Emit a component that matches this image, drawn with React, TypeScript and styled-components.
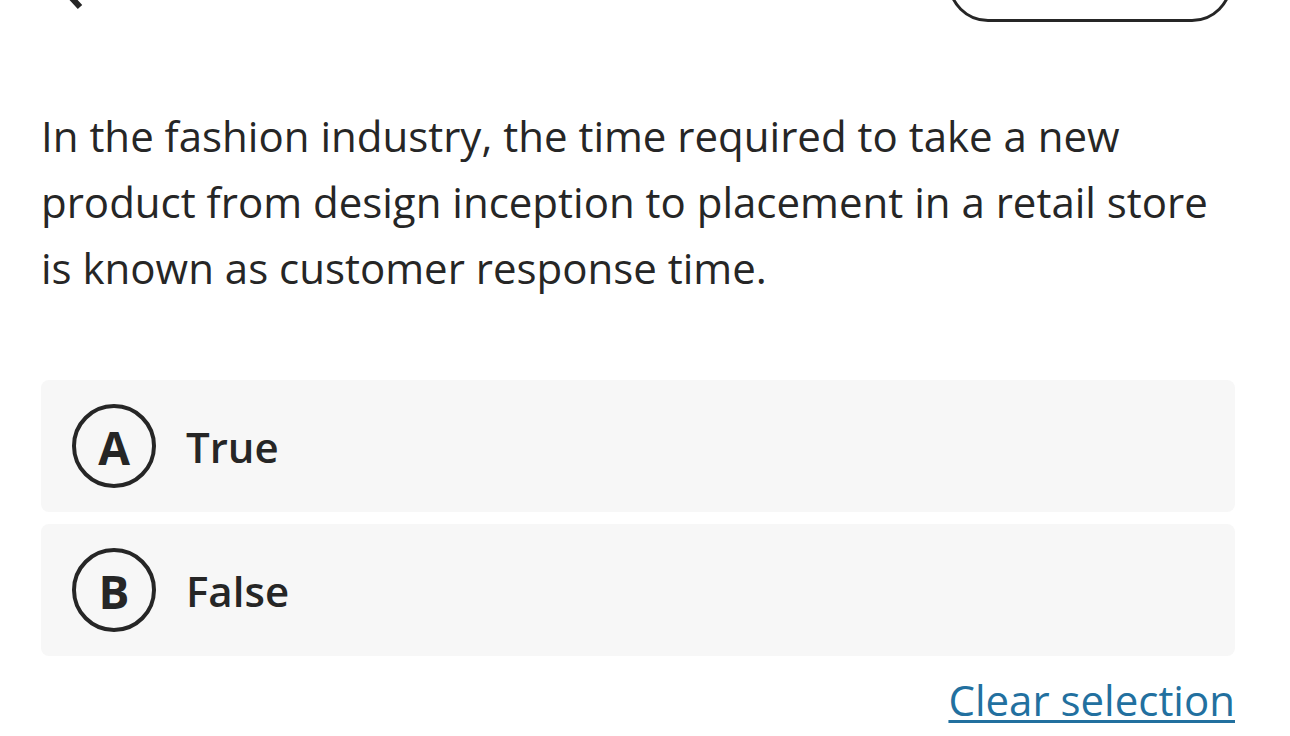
import styled, { createGlobalStyle } from "styled-components";

const GlobalStyle = createGlobalStyle`
  html, body {
    margin: 0;
    padding: 0;
    background: #fff;
    font-family: "Open Sans", "Noto Sans", sans-serif;
    color: #262626;
    overflow: hidden;
  }
`;

const Page = styled.div`
  width: 1194px;
  padding: 0 55px 0 41px;
`;

const Header = styled.header`
  height: 80px;
  margin-top: -58px;
  display: flex;
  justify-content: space-between;
  align-items: flex-end;
`;

const BackIcon = styled.svg`
  width: 40px;
  height: 56px;
  margin-left: 9px;
  margin-bottom: 11px;
`;

const PillButton = styled.button`
  width: 284px;
  height: 80px;
  margin-right: 3px;
  border: 3px solid #262626;
  border-radius: 40px;
  background: #fff;
`;

const Question = styled.p`
  margin: 81px 0 0;
  font-size: 42px;
  line-height: 66px;
  font-weight: 400;
  color: #262626;
`;

const Options = styled.div`
  margin-top: 79px;
  display: flex;
  flex-direction: column;
  gap: 12px;
`;

const Option = styled.div`
  height: 132px;
  box-sizing: border-box;
  padding-left: 31px;
  display: flex;
  align-items: center;
  gap: 30px;
  background: #f7f7f7;
  border-radius: 8px;
`;

const Letter = styled.span`
  width: 84px;
  height: 84px;
  box-sizing: border-box;
  border: 4px solid #262626;
  border-radius: 50%;
  display: flex;
  align-items: center;
  justify-content: center;
  font-size: 46px;
  font-weight: 700;
  line-height: 1;
  padding-top: 1px;
`;

const Label = styled.span`
  font-size: 42px;
  font-weight: 600;
  color: #262626;
`;

const Footer = styled.div`
  display: flex;
  justify-content: flex-end;
  margin-top: 14px;
`;

const ClearLink = styled.a`
  font-size: 42px;
  line-height: 60px;
  color: #22709f;
  text-decoration: underline;
  text-decoration-thickness: 3px;
  text-underline-offset: 4px;
  cursor: pointer;
`;

const options = [
  { key: "A", label: "True" },
  { key: "B", label: "False" },
];

export default function App() {
  return (
    <>
      <GlobalStyle />
      <Page>
        <Header>
          <BackIcon viewBox="0 0 40 56">
            <path
              d="M30 4 L8 28 L30 52"
              fill="none"
              stroke="#262626"
              strokeWidth="6"
              strokeLinecap="butt"
              strokeLinejoin="miter"
            />
          </BackIcon>
          <PillButton aria-label="menu" />
        </Header>
        <Question>
          In the fashion industry, the time required to take a new product from
          design inception to placement in a retail store is known as customer
          response time.
        </Question>
        <Options>
          {options.map((o) => (
            <Option key={o.key}>
              <Letter>{o.key}</Letter>
              <Label>{o.label}</Label>
            </Option>
          ))}
        </Options>
        <Footer>
          <ClearLink>Clear selection</ClearLink>
        </Footer>
      </Page>
    </>
  );
}
